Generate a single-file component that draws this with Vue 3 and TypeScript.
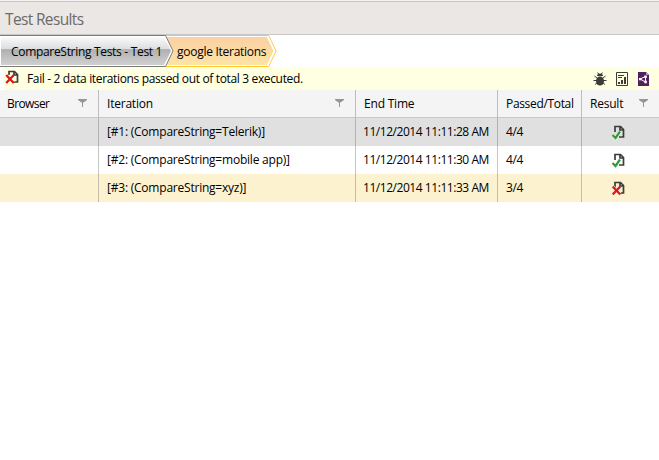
<script setup lang="ts">
interface Row { id: number; iteration: string; end: string; score: string; passed: boolean; kind: string }
const columns = [
  { key: 'browser', label: 'Browser', filter: true },
  { key: 'iteration', label: 'Iteration', filter: true },
  { key: 'end', label: 'End Time', filter: false },
  { key: 'score', label: 'Passed/Total', filter: false },
  { key: 'result', label: 'Result', filter: true },
]
const rows: Row[] = [
  { id: 1, iteration: '[#1: (CompareString=Telerik)]', end: '11/12/2014 11:11:28 AM', score: '4/4', passed: true, kind: 'selected' },
  { id: 2, iteration: '[#2: (CompareString=mobile app)]', end: '11/12/2014 11:11:30 AM', score: '4/4', passed: true, kind: 'plain' },
  { id: 3, iteration: '[#3: (CompareString=xyz)]', end: '11/12/2014 11:11:33 AM', score: '3/4', passed: false, kind: 'failed' },
]
</script>

<template>
  <main class="panel">
    <header class="title"><span>Test Results</span></header>
    <nav class="crumbs">
      <svg class="shapes" width="280" height="32" viewBox="0 0 280 32">
        <defs>
          <linearGradient id="silver" x1="0" y1="0" x2="0" y2="1">
            <stop offset="0" stop-color="#fafafa" />
            <stop offset=".42" stop-color="#dedede" />
            <stop offset=".45" stop-color="#b0b0b0" />
            <stop offset="1" stop-color="#d0d0d0" />
          </linearGradient>
          <linearGradient id="gold" x1="0" y1="0" x2="0" y2="1">
            <stop offset="0" stop-color="#fdd2a2" />
            <stop offset=".4" stop-color="#fcd7a2" />
            <stop offset="1" stop-color="#fde4a4" />
          </linearGradient>
        </defs>
        <path d="M160 .5H268.5L276 16L268.5 31.5H160Z" fill="#fff" stroke="#ffc62f" />
        <path d="M160 2H267L273.500 16L267 30H160Z" fill="url(#gold)" />
        <path d="M267.500 1L274.500 16L267.500 31" fill="none" stroke="#fff" stroke-width="1.500" />
        <path d="M-1 .5H165.500L173 16L165.500 31.500H-1Z" fill="#fff" stroke="#7b7b7b" />
        <path d="M1 2H164L171 16L164 30H1Z" fill="url(#silver)" />
      </svg>
      <span class="crumb root">CompareString Tests - Test 1</span>
      <span class="crumb leaf">google Iterations</span>
    </nav>
    <section class="summary">
      <svg class="doc" width="15" height="15" viewBox="0 0 15 15">
        <path d="M4 5V1.500H9.500L12.500 4.500V12H9M9 2V5H12" fill="none" stroke="#3c3c3c" stroke-width="1.700" />
        <path d="M1.500 5.500L8.500 12.500M8.500 5.500L1.500 12.500" stroke="#fff" stroke-width="3.500" />
        <path d="M1.200 5L8.800 13M8.800 5L1.200 13" stroke="#dc1c0c" stroke-width="2.400" />
      </svg>
      <span class="message">Fail - 2 data iterations passed out of total 3 executed.</span>
      <div class="tools">
        <svg width="14" height="14" viewBox="0 0 14 14">
          <path d="M1.500 4L4 6M12.500 4L10 6M.5 8.500H13.500M2 12.500L4.500 10.500M12 12.500L9.500 10.500M4.500 .5L6 2.500M9.500 .5L8 2.500" fill="none" stroke="#3c3c3c" />
          <path d="M4 4Q4 1.500 7 1.500T10 4Z" fill="#3c3c3c" />
          <ellipse cx="7" cy="9" rx="4" ry="4.500" fill="#3c3c3c" />
        </svg>
        <svg width="14" height="14" viewBox="0 0 14 14">
          <path d="M1.500 .5H12.500V13.500H1.500Z" fill="none" stroke="#3c3c3c" />
          <path d="M3 3.500H9M3 5.500H7" stroke="#3c3c3c" />
          <path d="M3 10H5V12H3ZM6 8H8V12H6ZM9 5H11V12H9Z" fill="#3c3c3c" />
        </svg>
        <svg width="14" height="14" viewBox="0 0 14 14">
          <path d="M1 0H9L12 3V14H1Z" fill="#53205f" />
          <path d="M9 0V3H12Z" fill="#b99abf" />
          <path d="M3 7L8.500 4.500V10Z" fill="none" stroke="#fff" stroke-width="1" />
          <path d="M7.300 3.500H9.800V6H7.300ZM7.300 8.700H9.800V11.200H7.300ZM2 6H4.300V8.200H2Z" fill="#fff" />
        </svg>
      </div>
    </section>
    <section class="grid">
      <div class="row head">
        <div v-for="c in columns" :key="c.key" class="cell" :class="c.key">
          <span class="label">{{ c.label }}</span>
          <svg v-if="c.filter" class="filter" width="9" height="8" viewBox="0 0 9 8">
            <path d="M0 0H9V1L5.500 3.500H5V8H4V3.500H3.500L0 1Z" fill="#969696" />
          </svg>
        </div>
      </div>
      <div v-for="r in rows" :key="r.id" class="row" :class="r.kind">
        <div class="cell browser"></div>
        <div class="cell iteration"><span>{{ r.iteration }}</span></div>
        <div class="cell end"><span>{{ r.end }}</span></div>
        <div class="cell score"><span>{{ r.score }}</span></div>
        <div class="cell result">
          <svg class="state" width="14" height="15" viewBox="0 0 14 15">
            <path d="M3 7V1.500H8.500L11.500 4.500V12H7M8 2V5H11.500" fill="none" stroke="#3c3c3c" stroke-width="1.700" />
            <template v-if="r.passed">
              <path d="M.5 10L3.500 13L8 6.500" fill="none" stroke="#fff" stroke-width="3" />
              <path d="M.5 10L3.500 13L8 6.500" fill="none" stroke="#329a36" stroke-width="2.200" />
            </template>
            <template v-else>
              <path d="M1 6L8 13M8 6L1 13" stroke="#fff" stroke-width="3.300" />
              <path d="M.7 5.500L8.300 13.500M8.300 5.500L.7 13.500" stroke="#dc1c0c" stroke-width="2.400" />
            </template>
          </svg>
        </div>
      </div>
    </section>
  </main>
</template>

<style>
body { background: #fff; }
</style>
<style scoped>
.panel { width: 659px; height: 460px; background: #fff; color: #000; font: 12px/16px "Open Sans", "Noto Sans", sans-serif; white-space: nowrap; overflow: hidden; }
.title { box-sizing: border-box; height: 35px; padding: 9px 5px 0; background: linear-gradient(#f6f4f3 0 1px, #c6c4c3 1px 2px, #ebe7e4 2px 34px, #c9c7c6 34px); color: #6b6b6b; font-size: 15.500px; line-height: 20px; letter-spacing: -.65px; }
.crumbs { position: relative; box-sizing: border-box; height: 32px; display: flex; align-items: center; padding-left: 11px; }
.shapes { position: absolute; left: 0; top: 0; }
.crumb { position: relative; padding-top: 2px; }
.root { width: 166px; letter-spacing: -.31px; }
.leaf { letter-spacing: -.27px; }
.summary { box-sizing: border-box; height: 23px; margin-left: 4px; display: flex; align-items: center; background: #ffffe1; padding-right: 8px; }
.doc { margin: 0 0 2px 1px; }
.message { margin-left: 7px; letter-spacing: -.35px; }
.tools { display: flex; gap: 8px; margin-left: auto; }
.row { height: 28px; display: grid; grid-template-columns: 99px 257px 142px 84px 77px; }
.cell { display: flex; align-items: center; padding-left: 7px; border-right: 1px solid rgba(110, 110, 110, .4); letter-spacing: -.22px; }
.cell.iteration, .cell.result { padding-left: 8px; }
.cell.end { letter-spacing: -.45px; }
.cell.score { padding-left: 8px; letter-spacing: -.33px; }
.cell.result { border-right: 0; }
.head { background: #f4f4f4; }
.head .cell { border-bottom: 1px solid #c8c8c8; }
.head .browser { letter-spacing: -.6px; }
.head .end { padding-left: 8px; letter-spacing: -.2px; }
.filter { margin: 0 11px 1px auto; }
.selected { background: #e0e0e0; }
.failed { background: #fcf2d0; }
.state { margin-left: 22px; }
</style>
